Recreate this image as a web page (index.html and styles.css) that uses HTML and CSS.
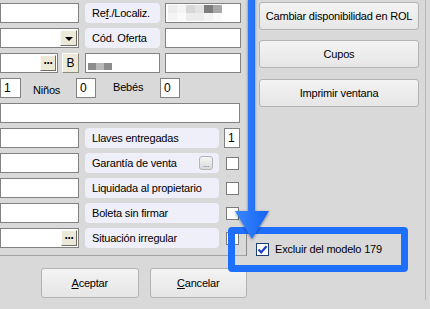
FILE: index.html
```html
<!DOCTYPE html>
<html>
<head>
<meta charset="utf-8">
<link rel="stylesheet" href="styles.css">
</head>
<body>
<div class="screen">
  <div class="left">
    <div class="group">
      <div class="row">
        <div class="in w79"></div>
        <div class="lbl w75 ml6">Re<u>f</u>./Localiz.</div>
        <div class="in w76 ml5 pixbox">
          <div class="pixgrid">
            <i class="c1"></i><i class="c2"></i><i class="c3"></i><i class="c4"></i><i class="c5"></i><i class="c6"></i>
            <i class="c2"></i><i class="c7"></i><i class="c1"></i><i class="c1"></i><i class="c2"></i><i class="c7"></i>
          </div>
        </div>
      </div>
      <div class="row">
        <div class="in w79 endbox"><span class="dd"><span class="tri"></span></span></div>
        <div class="lbl w75 ml6">Cód. Oferta</div>
        <div class="in w76 ml5"></div>
      </div>
      <div class="row">
        <div class="in w58 endbox"><span class="dots">···</span></div>
        <div class="bbtn">B</div>
        <div class="in w75 ml6 pixbox2"><i class="d1"></i><i class="d2"></i><i class="d1"></i></div>
        <div class="in w76 ml5"></div>
      </div>
      <div class="row">
        <div class="in w21 val">1</div>
        <span class="txt ninos">Niños</span>
        <div class="in w20 val">0</div>
        <span class="txt bebes">Bebés</span>
        <div class="in w20 val">0</div>
      </div>
      <div class="row">
        <div class="in w240"></div>
      </div>
      <div class="row">
        <div class="in w79"></div>
        <div class="lbl w134 ml6">Llaves entregadas</div>
        <div class="in w16 ml5 val">1</div>
      </div>
      <div class="row">
        <div class="in w79"></div>
        <div class="lbl w134 ml6">Garantía de venta<span class="mini">...</span></div>
        <span class="chk"></span>
      </div>
      <div class="row">
        <div class="in w79"></div>
        <div class="lbl w134 ml6">Liquidada al propietario</div>
        <span class="chk"></span>
      </div>
      <div class="row">
        <div class="in w79"></div>
        <div class="lbl w134 ml6">Boleta sin firmar</div>
        <span class="chk"></span>
      </div>
      <div class="row">
        <div class="in w79 endbox"><span class="dots">···</span></div>
        <div class="lbl w134 ml6">Situación irregular</div>
        <div class="tail"><span class="chk"></span></div>
      </div>
    </div>
    <div class="actions">
      <button class="btn act"><u>A</u>ceptar</button>
      <button class="btn act"><u>C</u>ancelar</button>
    </div>
  </div>
  <div class="right">
    <button class="btn rbtn">Cambiar disponibilidad en ROL</button>
    <button class="btn rbtn">Cupos</button>
    <button class="btn rbtn r3">Imprimir ventana</button>
  </div>
  <div class="edge"></div>

  <div class="callout">
    <span class="chk checked"><svg viewBox="0 0 11 11" width="11" height="11"><path d="M1.5 5.5 L4.2 8.3 L9.5 2.2" fill="none" stroke="#1f3fc4" stroke-width="2.2"/></svg></span>
    <span class="callout-text">Excluir del modelo 179</span>
  </div>

  <svg class="arrow" viewBox="0 0 430 309" width="430" height="309">
    <defs>
      <filter id="sh" x="-50%" y="-10%" width="200%" height="130%">
        <feDropShadow dx="0" dy="1" stdDeviation="1.4" flood-color="#000" flood-opacity="0.45"/>
      </filter>
      <linearGradient id="ag" x1="0" x2="1" y1="0" y2="0">
        <stop offset="0" stop-color="#3b86ff"/>
        <stop offset="1" stop-color="#1464f0"/>
      </linearGradient>
    </defs>
    <path d="M248 -2 L255 -2 L255 211 L269 211 L252 239 L235 211 L248 211 Z" fill="url(#ag)" filter="url(#sh)"/>
  </svg>
</div>
</body>
</html>
```

FILE: styles.css
```css
html, body {
  margin: 0;
  padding: 0;
  background: #d9d9d9;
}

.screen {
  position: relative;
  width: 430px;
  height: 309px;
  background: #d9d9d9;
  display: flex;
  overflow: hidden;
  font-family: "Liberation Sans", Arial, sans-serif;
  font-size: 11px;
  letter-spacing: -0.2px;
  color: #000;
}

.left {
  width: 247px;
  flex: none;
}

.group {
  height: 256px;
  box-sizing: border-box;
  border-bottom: 1px solid #a3a3a3;
  padding-top: 3px;
  display: flex;
  flex-direction: column;
  gap: 5px;
}

.row {
  height: 20px;
  display: flex;
  align-items: flex-start;
  flex: none;
}

.in {
  height: 20px;
  box-sizing: border-box;
  background: #fff;
  border: 1px solid #828282;
  flex: none;
}

.w16 { width: 16px; }
.w20 { width: 20px; }
.w21 { width: 21px; }
.w58 { width: 58px; }
.w75 { width: 75px; }
.w76 { width: 76px; }
.w79 { width: 79px; }
.w134 { width: 134px; }
.w240 { width: 240px; }
.ml5 { margin-left: 5px; }
.ml6 { margin-left: 6px; }

.val {
  display: flex;
  align-items: center;
  padding-left: 3px;
  font-size: 12px;
}

.lbl {
  height: 20px;
  box-sizing: border-box;
  background: #efeffa;
  border-radius: 4px;
  display: flex;
  align-items: center;
  padding-left: 7px;
  flex: none;
  white-space: nowrap;
}

.endbox {
  display: flex;
  justify-content: flex-end;
  align-items: center;
  padding-right: 1px;
}

.dd {
  width: 17px;
  height: 16px;
  box-sizing: border-box;
  background: #ece9d8;
  border: 1px solid;
  border-color: #fbfbf8 #716f64 #716f64 #fbfbf8;
  display: flex;
  align-items: center;
  justify-content: center;
}

.tri {
  width: 0;
  height: 0;
  border-left: 4px solid transparent;
  border-right: 4px solid transparent;
  border-top: 4px solid #000;
  margin-top: 1px;
}

.dots {
  width: 16px;
  height: 16px;
  box-sizing: border-box;
  background: #ece9d8;
  border: 1px solid;
  border-color: #fbfbf8 #716f64 #716f64 #fbfbf8;
  display: flex;
  align-items: center;
  justify-content: center;
  font-weight: bold;
  font-size: 12px;
  letter-spacing: -1px;
  line-height: 1;
}

.bbtn {
  width: 17px;
  height: 20px;
  margin-left: 4px;
  box-sizing: border-box;
  background: #ece9d8;
  border: 1px solid;
  border-color: #fbfbf8 #8d8b80 #8d8b80 #fbfbf8;
  display: flex;
  align-items: center;
  justify-content: center;
  font-size: 12px;
  flex: none;
}

.pixbox {
  padding: 1px 0 0 2px;
}
.pixgrid {
  display: grid;
  grid-template-columns: repeat(6, 9px);
  grid-template-rows: 8px 8px;
}
.pixgrid i { display: block; }
.c1 { background: #ececec; }
.c2 { background: #f4f4f4; }
.c3 { background: #d6d6d6; }
.c4 { background: #e2e2e2; }
.c5 { background: #7d7d7d; }
.c6 { background: #a8a8a8; }
.c7 { background: #fafafa; }

.pixbox2 {
  display: flex;
  align-items: flex-start;
  padding: 9px 0 0 2px;
}
.pixbox2 i {
  display: block;
  width: 8px;
  height: 7px;
}
.d1 { background: #8c8c8c; }
.d2 { background: #b9b9b9; }

.txt {
  flex: none;
  font-size: 11px;
}
.ninos {
  width: 43px;
  padding-left: 12px;
  margin-top: 6px;
  box-sizing: border-box;
  width: 55px;
}
.bebes {
  width: 64px;
  padding-left: 17px;
  box-sizing: border-box;
  margin-top: 3px;
}

.mini {
  margin-left: auto;
  margin-right: 6px;
  width: 14px;
  height: 14px;
  box-sizing: border-box;
  border: 1px solid #b4b4b4;
  border-radius: 3px;
  background: linear-gradient(#f6f6f6, #d9d9d9);
  color: #7a7a7a;
  font-size: 9px;
  letter-spacing: -0.5px;
  display: flex;
  align-items: flex-end;
  justify-content: center;
  line-height: 9px;
}

.chk {
  width: 13px;
  height: 13px;
  box-sizing: border-box;
  background: #fff;
  border: 1px solid #7a7a7a;
  margin-left: 7px;
  margin-top: 4px;
  flex: none;
  display: block;
}

.tail {
  width: 23px;
  height: 28px;
  margin-left: 5px;
  box-sizing: border-box;
  border-right: 1px solid #8a8a8a;
  flex: none;
}
.tail .chk {
  margin-left: 2px;
}

.actions {
  display: flex;
  gap: 11px;
  padding: 12px 0 0 41px;
}

.btn {
  font-family: "Liberation Sans", Arial, sans-serif;
  font-size: 11px;
  letter-spacing: -0.2px;
  color: #000;
  background: linear-gradient(#f3f3f3, #e6e6e6);
  border: 1px solid #b3b3b3;
  border-radius: 3px;
  padding: 0;
  margin: 0;
  box-sizing: border-box;
}

.act {
  width: 98px;
  height: 30px;
}

.right {
  margin-left: 12px;
  padding-top: 2px;
  display: flex;
  flex-direction: column;
  gap: 10px;
}

.rbtn {
  width: 160px;
  height: 28px;
}
.r3 { margin-top: 1px; }

.edge {
  position: absolute;
  left: 425px;
  top: 0;
  width: 1px;
  height: 300px;
  background: #b9b9b9;
}

.callout {
  position: absolute;
  left: 228px;
  top: 227px;
  width: 180px;
  height: 45px;
  box-sizing: border-box;
  border: 7px solid #1f6fff;
  border-radius: 4px;
  display: flex;
  align-items: center;
  padding-left: 21px;
  padding-bottom: 1px;
  background: transparent;
}

.callout .chk {
  margin: 0;
  border-color: #1c3f73;
  display: flex;
  align-items: center;
  justify-content: center;
}

.callout-text {
  margin-left: 6px;
  white-space: nowrap;
}

.arrow {
  position: absolute;
  left: 0;
  top: 0;
  pointer-events: none;
}
```
